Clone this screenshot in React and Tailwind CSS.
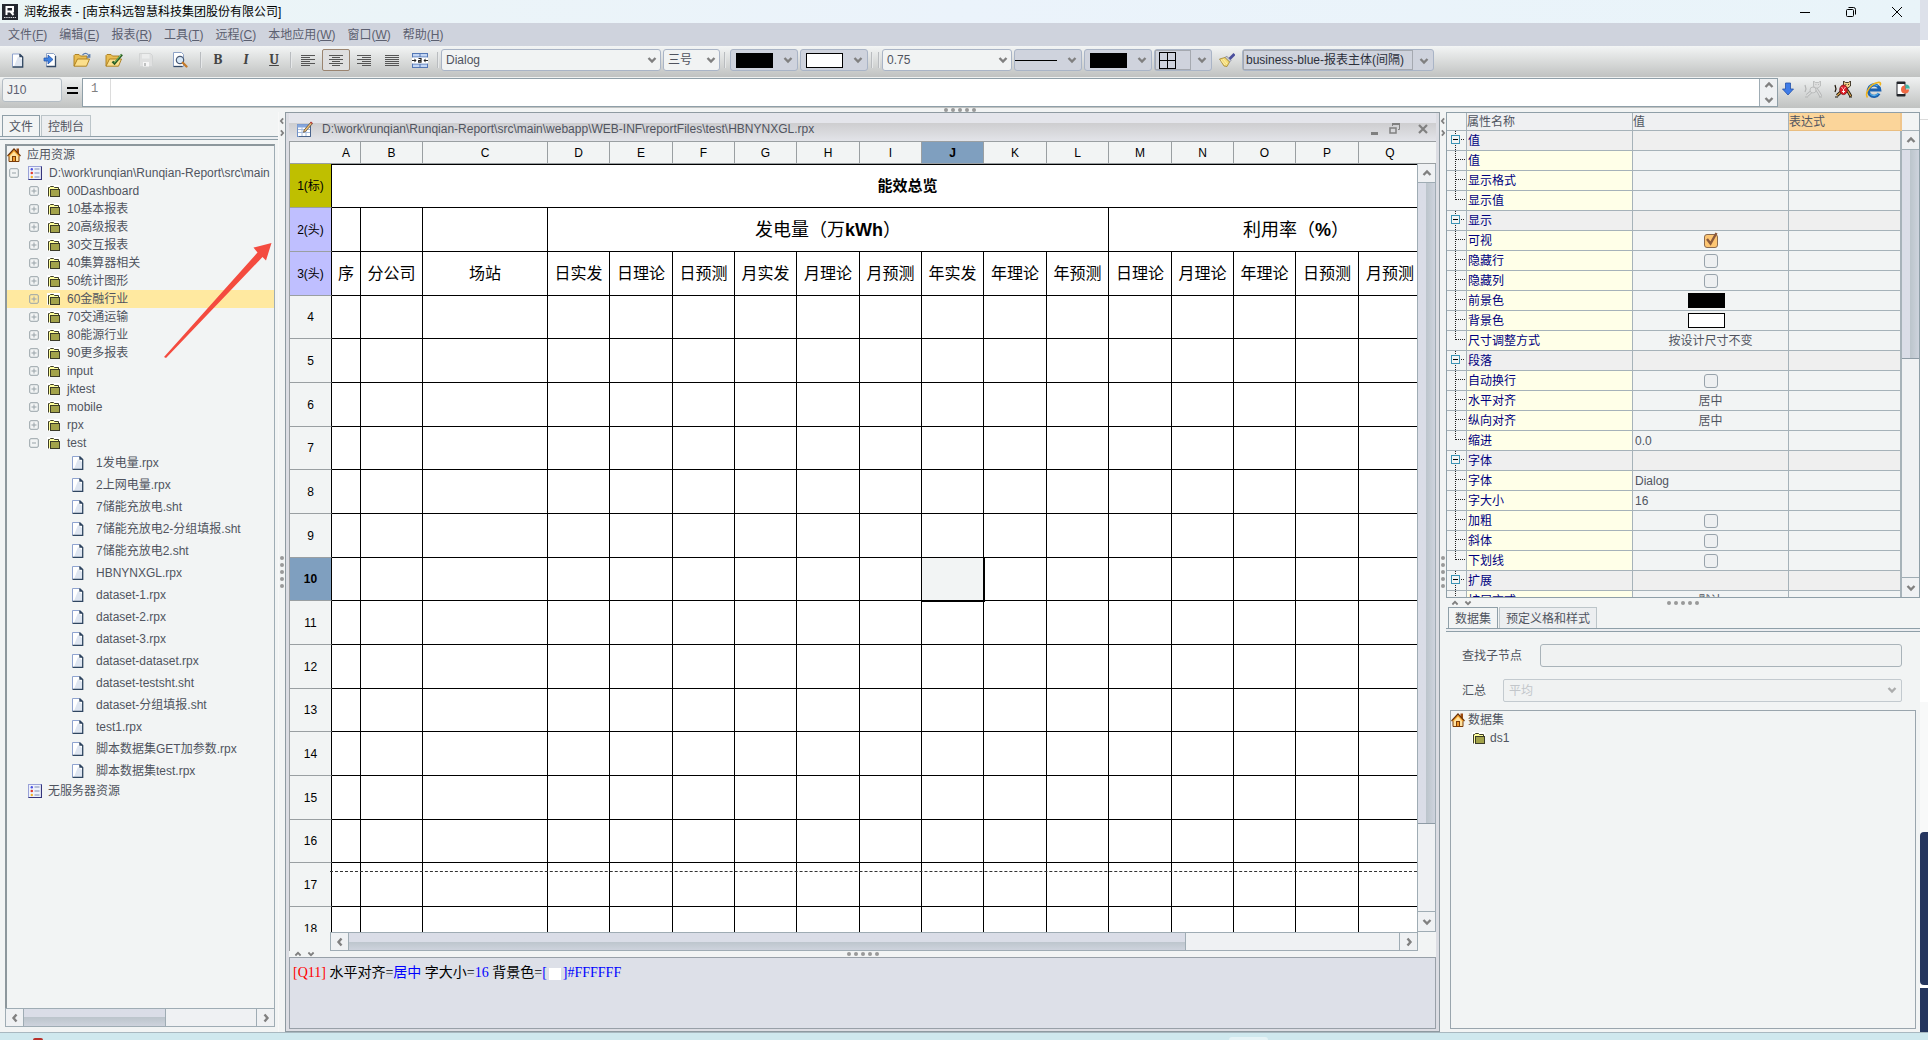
import React from 'react';

const MENUS = [
  ['文件', 'F'],
  ['编辑', 'E'],
  ['报表', 'R'],
  ['工具', 'T'],
  ['远程', 'C'],
  ['本地应用', 'W'],
  ['窗口', 'W'],
  ['帮助', 'H'],
];

const FOLDERS = [
  '00Dashboard', '10基本报表', '20高级报表', '30交互报表', '40集算器相关', '50统计图形',
  '60金融行业', '70交通运输', '80能源行业', '90更多报表', 'input', 'jktest', 'mobile', 'rpx', 'test',
];

const FILES = [
  '1发电量.rpx', '2上网电量.rpx', '7储能充放电.sht', '7储能充放电2-分组填报.sht', '7储能充放电2.sht',
  'HBNYNXGL.rpx', 'dataset-1.rpx', 'dataset-2.rpx', 'dataset-3.rpx', 'dataset-dataset.rpx',
  'dataset-testsht.sht', 'dataset-分组填报.sht', 'test1.rpx', '脚本数据集GET加参数.rpx', '脚本数据集test.rpx',
];

const COLUMNS = [
  ['A', 29], ['B', 62], ['C', 125], ['D', 62], ['E', 63], ['F', 62], ['G', 62], ['H', 63], ['I', 62],
  ['J', 62], ['K', 63], ['L', 62], ['M', 63], ['N', 62], ['O', 62], ['P', 63], ['Q', 63], ['', 62],
];

const HEADINGS = [
  '序', '分公司', '场站', '日实发', '日理论', '日预测', '月实发', '月理论', '月预测',
  '年实发', '年理论', '年预测', '日理论', '月理论', '年理论', '日预测', '月预测', '',
];

const BODY_ROWS = [4, 5, 6, 7, 8, 9, 10, 11, 12, 13, 14, 15, 16, 17, 18];

const PROPERTIES = [
  { name: '值', group: true },
  { name: '值' },
  { name: '显示格式' },
  { name: '显示值', last: true },
  { name: '显示', group: true },
  { name: '可视', type: 'check', checked: true },
  { name: '隐藏行', type: 'check' },
  { name: '隐藏列', type: 'check' },
  { name: '前景色', type: 'color', color: 'bg-black' },
  { name: '背景色', type: 'color', color: 'bg-white' },
  { name: '尺寸调整方式', type: 'center', value: '按设计尺寸不变', last: true },
  { name: '段落', group: true },
  { name: '自动换行', type: 'check' },
  { name: '水平对齐', type: 'center', value: '居中' },
  { name: '纵向对齐', type: 'center', value: '居中' },
  { name: '缩进', type: 'text', value: '0.0', last: true },
  { name: '字体', group: true },
  { name: '字体', type: 'text', value: 'Dialog' },
  { name: '字大小', type: 'text', value: '16' },
  { name: '加粗', type: 'check' },
  { name: '斜体', type: 'check' },
  { name: '下划线', type: 'check', last: true },
  { name: '扩展', group: true },
  { name: '扩展方式', type: 'center', value: '默认' },
];

/* ---------- icons ---------- */

function Chevron({ dir = 'down', className = '' }) {
  const d = {
    down: 'M1.5 3l3.5 3.5L8.500 3',
    up: 'M1.5 7l3.500-3.500L8.500 7',
    left: 'M6.500 1.500L3.500 5l3 3.500',
    right: 'M3.500 1.500L6.500 5l-3 3.500',
  }[dir];
  return (
    <svg viewBox="0 0 10 10" className={`w-2.5 h-2.5 shrink-0 ${className}`} fill="none" stroke="#808080" strokeWidth="2.4">
      <path d={d} />
    </svg>
  );
}

function AppLogo() {
  return (
    <svg viewBox="0 0 16 16" className="w-4 h-4 shrink-0">
      <rect width="16" height="16" fill="#23272f" />
      <path d="M4.500 11V3h6.500v4.500H5.500M8.500 7.500l3 3.500" fill="none" stroke="#fff" strokeWidth="2" />
      <path d="M2 13.500h12" stroke="#d8dade" strokeWidth="1" strokeDasharray="1.500 .7" />
    </svg>
  );
}

function PageIcon({ className = 'w-3.5 h-3.5' }) {
  return (
    <svg viewBox="0 0 14 14" className={`shrink-0 ${className}`}>
      <path d="M1.500.5h7l3 3v10h-10z" fill="#fff" />
      <path d="M7 3l4 3v7H3z" fill="#dfe6f1" />
      <path d="M1.500 13V.5H8.500" fill="none" stroke="#8fa3cf" />
      <path d="M8.500.5l3.200 3v10H1.500" fill="none" stroke="#2f4560" strokeWidth="1.300" />
      <path d="M8.300.5v3.300h3.400z" fill="#2f4560" />
    </svg>
  );
}

function FolderIcon() {
  return (
    <svg viewBox="0 0 14 14" className="w-3.5 h-3.5 shrink-0">
      <rect x="0" y="1" width="13" height="12" fill="#fff" />
      <path d="M1.500 12.500v-9h1l1-1h3l1 1h4v2" fill="#ffff9c" stroke="#3c3c28" />
      <rect x="3.500" y="5.500" width="9" height="7" fill="#a3a34a" stroke="#3c3c28" />
    </svg>
  );
}

function HomeIcon() {
  return (
    <svg viewBox="0 0 14 14" className="w-3.5 h-3.5 shrink-0">
      <rect x="9.500" y="0.500" width="2.500" height="5" fill="#9a4a10" />
      <path d="M2 7l5-5.500L12 7v6.500H2z" fill="#ffe2a0" stroke="#7a3c08" />
      <path d="M.5 8L7 1l6.500 7" fill="none" stroke="#6b3206" strokeWidth="1.200" />
      <path d="M1.800 8.300L7 2.800l5.200 5.500" fill="none" stroke="#f6a32a" strokeWidth="1.100" />
      <rect x="5.500" y="8.500" width="3" height="5" fill="#f09a2a" stroke="#7a3c08" />
    </svg>
  );
}

function ServerIcon() {
  return (
    <svg viewBox="0 0 14 14" className="w-3.5 h-3.5 shrink-0">
      <rect x=".5" y=".5" width="13" height="13" fill="#eef1fb" stroke="#9aa2d8" />
      <path d="M.5 13.500h13v-13" fill="none" stroke="#35357c" strokeWidth="1.200" />
      <circle cx="3.800" cy="3.200" r="1.200" fill="#4a50e0" />
      <circle cx="3.800" cy="7" r="1.300" fill="#e03a30" />
      <circle cx="3.800" cy="11" r="1.200" fill="#f2b02a" />
      <path d="M6.500 3h5M6.500 7h5M6.500 11h5" stroke="#7f8db4" />
    </svg>
  );
}

function Expander({ open, label }) {
  return (
    <button type="button" aria-label={label} className="w-2.5 h-2.5 shrink-0">
      <svg viewBox="0 0 10 10" className="w-2.5 h-2.5" fill="none" stroke="#98a3a8">
        <rect x=".7" y=".7" width="8.600" height="8.600" rx="1.200" />
        <path d={open ? 'M3 5h4' : 'M2.500 5h5M5 2.500v5'} />
      </svg>
    </button>
  );
}

function ImportIcon() {
  return (
    <svg viewBox="0 0 14 16" className="w-3.5 h-4">
      <path d="M3.500 1.500h7l2 2v11h-9z" fill="#fff" stroke="#8ea3c6" />
      <path d="M12.500 4v10.500h-9" fill="none" stroke="#334a68" strokeWidth="1.300" />
      <path d="M1 6h4V3l5 4.500L5 12V9H1z" fill="#3f82e0" stroke="#1c4fa8" strokeWidth=".7" />
    </svg>
  );
}

function OpenIcon({ pencil }) {
  return (
    <svg viewBox="0 0 18 16" className="w-[18px] h-4">
      <path d="M1 14V3.500l1-1h4l1.500 1.500H14V7" fill="#e9bd52" stroke="#a87a1a" strokeWidth=".9" />
      <path d="M1 14.200L4.500 7h12L13.500 14.200z" fill="#fbdf8c" stroke="#a87a1a" strokeWidth=".9" />
      {pencil ? (
        <>
          <path d="M7.500 9.500l2 2L17 2.500" fill="none" stroke="#2a5e25" strokeWidth="2.400" />
          <path d="M9.500 10.500l6.800-8" fill="none" stroke="#9be07d" strokeWidth=".8" />
        </>
      ) : (
        <path d="M9.500 3C12 .5 15 1 16 4.500M16.800 2v3.200h-3" fill="none" stroke="#5a7db0" strokeWidth="1.200" />
      )}
    </svg>
  );
}

function SaveIcon() {
  return (
    <svg viewBox="0 0 14 14" className="w-3.5 h-3.5">
      <path d="M.5.5h11l2 2v11H.5z" fill="#dfe0e0" stroke="#d2d4d4" />
      <rect x="3" y="1" width="7.500" height="4.500" fill="#eceded" />
      <rect x="4" y="9" width="6" height="4.500" fill="#f6f6f6" />
      <rect x="5" y="10" width="2" height="3" fill="#bfc1c1" />
    </svg>
  );
}

function PreviewIcon() {
  return (
    <svg viewBox="0 0 16 16" className="w-4 h-4">
      <path d="M1.500.5h8l2 2v12h-10z" fill="#fff" stroke="#8ea3c6" />
      <path d="M1.500 14.500h9" stroke="#334a68" strokeWidth="1.300" />
      <circle cx="8" cy="8" r="3.700" fill="#d7e8f8" stroke="#4a5a74" strokeWidth="1.200" />
      <path d="M10.800 10.800l3.700 3.700" stroke="#c47a2a" strokeWidth="2.300" strokeLinecap="round" />
    </svg>
  );
}

function AlignIcon({ kind }) {
  const d = {
    left: 'M0 1.500h14M0 3.500h9M0 5.500h14M0 7.500h9M0 9.500h14M0 11.500h9',
    center: 'M0 1.500h14M3 3.500h8M0 5.500h14M3 7.500h8M0 9.500h14M3 11.500h8',
    right: 'M0 1.500h14M5 3.500h9M0 5.500h14M5 7.500h9M0 9.500h14M5 11.500h9',
    justify: 'M0 1.500h14M0 3.500h14M0 5.500h14M0 7.500h14M0 9.500h14M0 11.500h14',
  }[kind];
  return (
    <svg viewBox="0 0 14 13" className="w-3.5 h-[13px]" stroke="#555" shapeRendering="crispEdges">
      <path d={d} />
    </svg>
  );
}

function MergeIcon() {
  return (
    <svg viewBox="0 0 16 15" className="w-4 h-[15px]">
      <rect x=".5" y=".5" width="15" height="14" fill="#c3d6f4" stroke="#5377b5" />
      <path d="M.5 4h15M.5 11h15M8 .5V4M8 11v3.500" stroke="#5377b5" />
      <rect x="0" y="4.500" width="16" height="6" fill="#fff" />
      <path d="M0 7.500h3M16 7.500h-3" stroke="#222" />
      <path d="M2.500 5.500L4.500 7.500 2.500 9.500zM13.500 5.500l-2 2 2 2z" fill="#222" />
      <path d="M6.500 5.500h2.500v4M9 7.500H6.700v1.700h2.800" fill="none" stroke="#222" strokeWidth="1.200" />
    </svg>
  );
}

function BrushIcon() {
  return (
    <svg viewBox="0 0 16 14" className="w-4 h-3.5">
      <path d="M15.500 1L10 6.500" stroke="#4b4f9c" strokeWidth="2.800" />
      <path d="M7.500 3l4.500 4.500-1.500 1.500-4.500-4z" fill="#c8ccd8" stroke="#666b80" strokeWidth=".6" />
      <path d="M.5 6l5.500-1.500 4.500 4.500-2.500 4.500-3-.5z" fill="#f4dc78" stroke="#9a7a20" strokeWidth=".7" />
      <path d="M2 7l4 5M4 6l4 5" stroke="#fdf2bc" strokeWidth=".8" />
    </svg>
  );
}

function SheetIcon() {
  return (
    <svg viewBox="0 0 16 16" className="w-4 h-4 shrink-0">
      <rect x=".5" y="3.500" width="13" height="12" fill="#fff" stroke="#7292c8" />
      <path d="M.5 5h13" stroke="#86a6dc" strokeWidth="3" />
      <path d="M1 8.500h12M1 11.500h12M5 6v9M9 6v9" stroke="#a9bede" />
      <path d="M13.500 4v11.500H2" fill="none" stroke="#4a648c" />
      <path d="M14 1l1.500 1.500L8.500 10.500l-2 .8.600-2.200z" fill="#f0c070" stroke="#5c4a38" strokeWidth=".8" />
      <path d="M13 1.500L14 .5l1.700 1.600-1 1z" fill="#c03c3c" />
    </svg>
  );
}

function DogIcon({ muted }) {
  const body = muted ? '#dcdddd' : '#d9a04a';
  const line = muted ? '#b4b6b6' : '#20180c';
  return (
    <svg viewBox="0 0 18 17" className="w-[18px] h-[17px]">
      <path d="M3 14.500l4-3.500 4-5 4 6 2 3.500" fill="none" stroke={line} strokeWidth="3" />
      <path d="M3 14.500l4-3.500 4-5 4 6 2 3.500" fill="none" stroke={body} strokeWidth="1.300" />
      <path d="M9.500 0l2 1.500h3L16.500 0v5l-2.500 2h-3L9.500 5z" fill={muted ? '#dcdddd' : '#f2cf8a'} stroke={line} strokeWidth=".8" />
      <path d="M11.500 3.500h.8M14.200 3.500h.8M1 4l1 4-1 3M1 16h3M15 16h3" stroke={line} strokeWidth="1.200" fill="none" />
      {muted ? (
        <circle cx="9" cy="9" r="3" fill="#dedfdf" stroke={line} strokeWidth=".8" />
      ) : (
        <>
          <ellipse cx="9.500" cy="8.800" rx="3.800" ry="4.800" fill="#e0202a" stroke="#7c0d12" strokeWidth=".8" />
          <path d="M7.500 6.500l1.500 1M11.500 6.500l-1.500 1M8 10.500h3M9.500 8v4" stroke="#fff" strokeWidth=".9" />
        </>
      )}
    </svg>
  );
}

function BrowserIcon() {
  return (
    <svg viewBox="0 0 17 17" className="w-[17px] h-[17px]" fill="none">
      <path d="M14 12.500A5.700 5.700 0 1 1 14.700 9H5" stroke="#1c62b0" strokeWidth="3.200" />
      <path d="M13.500 12A5 5 0 0 1 5 12.500M4.500 6.500a5 5 0 0 1 8-1.500" stroke="#54b4ee" strokeWidth="1.200" />
      <path d="M2.500 16.500C-.5 12 5 3 13 1.500c2.500-.4 3 .8 2 2.800" stroke="#f0b41c" strokeWidth="1.600" />
    </svg>
  );
}

function PhoneIcon() {
  return (
    <svg viewBox="0 0 14 16" className="w-3.5 h-4">
      <rect x=".5" y=".5" width="9" height="15" rx="1" fill="#22252a" />
      <rect x="1.500" y="3" width="7" height="10" fill="#fff" />
      <path d="M9 4.500a4 4 0 1 0 4 4H9z" fill="#f06a44" />
      <path d="M9.800 3.500a4.200 4.200 0 0 1 4 4h-4z" fill="#3eb7a5" />
    </svg>
  );
}

/* ---------- small controls ---------- */

function IconButton({ label, className = 'w-8', children }) {
  return (
    <button type="button" aria-label={label} className={`h-[22px] flex items-center justify-center shrink-0 ${className}`}>
      {children}
    </button>
  );
}

function Separator({ className = 'w-1.5' }) {
  return (
    <div className={`h-4 mt-[3px] shrink-0 flex justify-center ${className}`}>
      <div className="w-0.5 bg-[#b9bcbf] border-r border-[#e6e8e9]" />
    </div>
  );
}

function Combo({ label, value, className }) {
  return (
    <div className={`relative shrink-0 ${className}`}>
      <select
        aria-label={label}
        defaultValue={value}
        className="appearance-none w-full h-[22px] pl-1 pr-5 rounded-[3px] border border-[#a9b4c6] bg-[#f1f3f3] text-xs leading-5 outline-none"
      >
        <option>{value}</option>
      </select>
      <Chevron className="absolute right-1 top-1.5" />
    </div>
  );
}

function DropButton({ label, className = 'w-[68px]', children }) {
  return (
    <button
      type="button"
      aria-label={label}
      className={`h-[22px] shrink-0 flex items-center justify-between pr-1 rounded-[3px] border border-[#a9b4c6] bg-[#cfd3dd] ${className}`}
    >
      {children}
      <Chevron />
    </button>
  );
}

function GripDots({ vertical }) {
  return (
    <div className={`flex gap-[3px] ${vertical ? 'flex-col' : ''}`}>
      {[0, 1, 2, 3, 4].map((n) => (
        <span key={n} className="w-1 h-1 rounded-full bg-[#999]" />
      ))}
    </div>
  );
}

function VSplitter() {
  return (
    <div className="relative w-1.5 shrink-0 flex items-center justify-center">
      <div className="absolute top-1 -left-0.5 flex flex-col gap-0.5">
        <Chevron dir="left" className="scale-75" />
        <Chevron dir="right" className="scale-75" />
      </div>
      <GripDots vertical />
    </div>
  );
}

function HSplitter({ className }) {
  return (
    <div className={`relative shrink-0 flex items-center justify-center bg-[#f2f4f4] ${className}`}>
      <div className="absolute left-1 inset-y-0 flex items-center gap-[3px] overflow-hidden">
        <Chevron dir="up" className="scale-75" />
        <Chevron dir="down" className="scale-75" />
      </div>
      <GripDots />
    </div>
  );
}

function HScroll({ thumb, className = '' }) {
  return (
    <div className={`h-[19px] shrink-0 flex border border-[#9facb4] bg-[#eff1f3] ${className}`}>
      <button type="button" aria-label="向左滚动" className="w-[18px] flex items-center justify-center border-r border-[#9facb4]">
        <Chevron dir="left" />
      </button>
      <div className="flex-1">
        <div
          className="h-full border-r border-[#9facb4] bg-linear-to-b from-[#dadde7] from-50% via-[#bcc5cc] via-50% to-[#ced3dd]"
          style={{ width: thumb }}
        />
      </div>
      <button type="button" aria-label="向右滚动" className="w-[18px] flex items-center justify-center border-l border-[#9facb4]">
        <Chevron dir="right" />
      </button>
    </div>
  );
}

function VScroll({ thumb, className = '' }) {
  return (
    <div className={`shrink-0 flex flex-col bg-[#eff1f3] ${className}`}>
      <button type="button" aria-label="向上滚动" className="h-[19px] flex items-center justify-center border-b border-[#9facb4]">
        <Chevron dir="up" />
      </button>
      <div className="flex-1">
        <div
          className="border-b border-[#8e9ba5] bg-linear-to-r from-[#dadde7] from-50% via-[#bcc5cc] via-50% to-[#ced3dd]"
          style={{ height: thumb }}
        />
      </div>
      <button type="button" aria-label="向下滚动" className="h-5 flex items-center justify-center border-t border-[#9facb4]">
        <Chevron />
      </button>
    </div>
  );
}

function Tabs({ items }) {
  return (
    <div className="shrink-0">
      <div className="flex items-end gap-px pl-0.5 h-[21px]" role="tablist">
        {items.map((item, i) => (
          <button
            key={item}
            type="button"
            role="tab"
            aria-selected={i === 0}
            className={
              i === 0
                ? 'h-[21px] px-1.5 pt-px border border-b-0 border-[#8f9fa8] bg-[#f2f4f4] leading-5'
                : 'h-[21px] px-1.5 pt-px border border-b-0 border-[#bcc5c9] bg-[#eceef0] leading-5'
            }
          >
            {item}
          </button>
        ))}
      </div>
      <div className="h-1 border-y border-[#8f9fa8] bg-[#eceef1]" />
    </div>
  );
}

/* ---------- panels ---------- */

function TitleBar() {
  return (
    <header className="h-[23px] shrink-0 flex items-center justify-between bg-linear-to-r from-[#ebf5f6] via-[#ebf3fb] to-[#e9f4f9] text-black">
      <div className="flex items-center gap-1.5 pl-0.5">
        <AppLogo />
        <h1>润乾报表 - [南京科远智慧科技集团股份有限公司]</h1>
      </div>
      <div className="flex">
        <IconButton label="最小化" className="w-[46px]">
          <svg viewBox="0 0 10 10" className="w-2.5 h-2.5" stroke="#000"><path d="M0 5.500h10" /></svg>
        </IconButton>
        <IconButton label="还原" className="w-[46px]">
          <svg viewBox="0 0 10 10" className="w-2.5 h-2.5" fill="none" stroke="#000">
            <rect x=".5" y="2.500" width="7" height="7" rx="1" />
            <path d="M2.500.5h5a2 2 0 0 1 2 2v5" />
          </svg>
        </IconButton>
        <IconButton label="关闭" className="w-[46px]">
          <svg viewBox="0 0 10 10" className="w-2.5 h-2.5" stroke="#000"><path d="M0 0l10 10M10 0L0 10" /></svg>
        </IconButton>
      </div>
    </header>
  );
}

function MenuBar() {
  return (
    <nav className="h-[23px] shrink-0 flex items-center pl-0.5 bg-[#cfd3dd] text-[#5c6070]">
      {MENUS.map(([name, key]) => (
        <button key={name + key} type="button" className="px-1.5">
          {name}(<span className="underline">{key}</span>)
        </button>
      ))}
    </nav>
  );
}

function Toolbar() {
  return (
    <div className="h-[31px] shrink-0 flex items-start pt-[3px] pl-0.5 bg-linear-to-b from-[#f3f5f5] to-[#c0c2c1]">
      <IconButton label="新建"><PageIcon className="w-3.5 h-[15px]" /></IconButton>
      <IconButton label="导入"><ImportIcon /></IconButton>
      <IconButton label="打开"><OpenIcon /></IconButton>
      <IconButton label="打开并编辑"><OpenIcon pencil /></IconButton>
      <IconButton label="保存"><SaveIcon /></IconButton>
      <IconButton label="预览" className="w-9"><PreviewIcon /></IconButton>
      <Separator />
      <IconButton label="加粗" className="w-7 font-serif text-sm font-bold text-[#444]">B</IconButton>
      <IconButton label="斜体" className="w-7 font-serif text-sm font-bold italic text-[#444]">I</IconButton>
      <IconButton label="下划线" className="w-7 font-serif text-sm font-bold underline text-[#444]">U</IconButton>
      <Separator />
      <IconButton label="左对齐" className="w-7"><AlignIcon kind="left" /></IconButton>
      <IconButton label="居中" className="w-7 border border-[#9a8470] rounded-xs bg-[#dfdfe0]"><AlignIcon kind="center" /></IconButton>
      <IconButton label="右对齐" className="w-7"><AlignIcon kind="right" /></IconButton>
      <IconButton label="两端对齐" className="w-7"><AlignIcon kind="justify" /></IconButton>
      <IconButton label="合并单元格" className="w-7"><MergeIcon /></IconButton>
      <Separator className="w-[7px]" />
      <Combo label="字体" value="Dialog" className="w-[220px]" />
      <Combo label="字号" value="三号" className="w-[57px] ml-0.5" />
      <Separator className="w-2.5" />
      <DropButton label="前景色"><span className="w-[37px] h-[15px] ml-[5px] bg-black" /></DropButton>
      <DropButton label="背景色" className="w-[68px] ml-0.5"><span className="w-[37px] h-[15px] ml-[5px] bg-white border border-black" /></DropButton>
      <Separator className="w-[7px]" />
      <Separator className="w-[7px]" />
      <Combo label="线宽" value="0.75" className="w-[130px]" />
      <DropButton label="线型" className="w-[68px] ml-0.5"><span className="w-[42px] h-px bg-black" /></DropButton>
      <DropButton label="边框颜色" className="w-[68px] ml-0.5"><span className="w-[37px] h-[15px] ml-[5px] bg-black" /></DropButton>
      <DropButton label="边框" className="w-[58px] ml-0.5">
        <span className="w-9 h-5 pl-[3px] flex items-center border border-[#a5a9b0]">
          <svg viewBox="0 0 17 17" className="w-[17px] h-[17px]" fill="none" stroke="#000" shapeRendering="crispEdges">
            <path d="M.5.5h16v16H.5zM8.500 0v17M0 8.500h17" />
          </svg>
        </span>
      </DropButton>
      <IconButton label="格式刷" className="w-[30px]"><BrushIcon /></IconButton>
      <div className="relative w-[192px] h-[22px] shrink-0 pr-5 rounded-[3px] border border-[#a9b4c6] bg-[#cfd3dd]">
        <select
          aria-label="报表样式"
          defaultValue="style"
          className="appearance-none w-full h-5 pl-0.5 border border-[#a5a9b0] leading-4 text-[#2c2f3a] outline-none"
        >
          <option value="style">business-blue-报表主体(间隔)</option>
        </select>
        <Chevron className="absolute right-1 top-1.5" />
      </div>
    </div>
  );
}

function FormulaBar() {
  return (
    <div className="h-[31px] shrink-0 flex items-start pt-px bg-linear-to-b from-[#f0f2f2] to-[#c0c2c1]">
      <input
        aria-label="单元格"
        defaultValue="J10"
        className="w-[60px] h-6 ml-0.5 pl-1 rounded-[3px] border border-[#b3bcc4] bg-[#f0f2f2] text-[#5c6070] outline-none"
      />
      <div className="w-5 h-6 flex flex-col items-center justify-center gap-[3px]">
        <span className="w-[11px] h-0.5 bg-black" />
        <span className="w-[11px] h-0.5 bg-black" />
      </div>
      <div className="flex-1 h-[29px] flex border border-[#8f9fa8] bg-white">
        <span className="w-7 pt-0.5 pr-1 text-center leading-4 text-[#808080] border-r border-[#dcdcdc] font-['Liberation_Mono']">1</span>
        <input aria-label="表达式" className="flex-1 px-1 outline-none" />
        <div className="w-[18px] flex flex-col items-center justify-between py-px border-l border-[#9facb4] bg-[#eff1f3]">
          <button type="button" aria-label="上一行"><Chevron dir="up" /></button>
          <button type="button" aria-label="下一行"><Chevron /></button>
        </div>
      </div>
      <IconButton label="向下" className="w-5">
        <svg viewBox="0 0 12 14" className="w-3 h-3.5">
          <path d="M3.500 1h5v6h3L6 13 .5 7h3z" fill="#3f7ce8" stroke="#2452a8" strokeWidth=".8" />
        </svg>
      </IconButton>
      <IconButton label="停止服务" className="w-[30px]"><DogIcon muted /></IconButton>
      <IconButton label="启动服务" className="w-[30px]"><DogIcon /></IconButton>
      <IconButton label="浏览器预览" className="w-[30px]"><BrowserIcon /></IconButton>
      <IconButton label="手机预览" className="w-[30px] mr-0.5"><PhoneIcon /></IconButton>
    </div>
  );
}

function ResourcePanel() {
  return (
    <aside className="w-[279px] shrink-0 flex flex-col pt-[3px] pb-[5px] border-r border-[#f8f8f8]">
      <Tabs items={['文件', '控制台']} />
      <div className="flex-1 min-h-0 flex flex-col mt-1 ml-[5px] mr-[3px]">
        <ul className="relative flex-1 min-h-0 border-l-2 border-t-2 border-r border-[#8d979c] border-r-[#9facb4] whitespace-nowrap overflow-hidden">
          <li className="h-[18px] flex items-center gap-1.5">
            <HomeIcon />
            应用资源
          </li>
          <li className="h-[18px] flex items-center pl-0.5">
            <Expander open label="收起应用" />
            <span className="flex items-center gap-[7px] pl-[9px]">
              <ServerIcon />
              D:\work\runqian\Runqian-Report\src\main
            </span>
          </li>
          {FOLDERS.map((name) => (
            <li
              key={name}
              className={`h-[18px] flex items-center pl-[22px] ${name.startsWith('60') ? 'bg-[#ffe9a0]' : ''}`}
            >
              <Expander open={name === 'test'} label={`展开 ${name}`} />
              <span className="flex items-center gap-1.5 pl-2">
                <FolderIcon />
                {name}
              </span>
            </li>
          ))}
          {FILES.map((name) => (
            <li key={name} className="h-[22px] flex items-center gap-[11px] pl-16">
              <PageIcon />
              {name}
            </li>
          ))}
          <li className="h-[18px] flex items-center gap-1.5 pl-[21px]">
            <ServerIcon />
            无服务器资源
          </li>
          {/* annotation arrow drawn over the tree */}
          <svg viewBox="0 0 108 116" className="absolute left-[157px] top-[96px] w-[108px] h-[116px]" fill="#f44b3f">
            <path d="M0 115L93.500 10.500l-4-5L107.500 1l-5.500 17.500-3.500-3.500L2 116z" />
          </svg>
        </ul>
        <HScroll thumb="61%" />
      </div>
    </aside>
  );
}

function ReportGrid() {
  return (
    <table className="table-fixed border-separate border-spacing-0 w-[1194px] text-black">
      <colgroup>
        <col className="w-[42px]" />
        {COLUMNS.map(([name, width], i) => (
          <col key={name + i} style={{ width }} />
        ))}
      </colgroup>
      <thead>
        <tr className="h-[22px]">
          <th className="p-0 bg-[#f2f4f4] border-b border-[#9a9fa2]" />
          {COLUMNS.map(([name], i) => (
            <th
              key={name + i}
              className={`p-0 border-b border-r border-[#9a9fa2] text-xs ${name === 'J' ? 'bg-[#7f9fbf] font-bold' : 'bg-[#f2f4f4] font-normal'}`}
            >
              {name}
            </th>
          ))}
        </tr>
      </thead>
      <tbody className="text-base leading-5">
        <tr className="h-11">
          <th className="p-0 bg-[#bfbf00] border-b border-r border-b-[#9a9fa2] border-r-black text-xs font-normal">1(标)</th>
          <td colSpan={18} className="p-0 border-y border-r border-black text-center text-[15px] font-bold">能效总览</td>
        </tr>
        <tr className="h-11">
          <th className="p-0 bg-[#bfbfff] border-b border-r border-b-[#9a9fa2] border-r-black text-xs font-normal">2(头)</th>
          <td className="border-b border-r border-black" />
          <td className="border-b border-r border-black" />
          <td className="border-b border-r border-black" />
          <td colSpan={9} className="p-0 border-b border-r border-black text-center text-lg leading-5">发电量（万<b>kWh</b>）</td>
          <td colSpan={6} className="p-0 border-b border-r border-black text-center text-lg leading-5">利用率（<b>%</b>）</td>
        </tr>
        <tr className="h-11">
          <th className="p-0 bg-[#bfbfff] border-b border-r border-b-[#9a9fa2] border-r-black text-xs font-normal">3(头)</th>
          {HEADINGS.map((text, i) => (
            <td key={i} className="p-0 border-b border-r border-black text-center whitespace-nowrap">{text}</td>
          ))}
        </tr>
        {BODY_ROWS.map((row) => (
          <tr key={row} className={row % 3 === 1 ? 'h-[43px]' : 'h-11'}>
            <th
              className={`p-0 border-b border-r border-b-[#9a9fa2] border-r-black text-xs ${row === 10 ? 'bg-[#7f9fbf] font-bold' : 'bg-[#f2f4f4] font-normal'}`}
            >
              {row}
            </th>
            {COLUMNS.map(([name], i) => (
              <td
                key={i}
                className={`p-0 border-b border-r border-black ${name === 'J' && row === 10 ? 'bg-[#f2f4f4] outline outline-black' : ''}`}
              />
            ))}
          </tr>
        ))}
      </tbody>
    </table>
  );
}

function ReportWindow() {
  return (
    <main className="flex-1 min-w-0 flex flex-col border border-[#8e9aa1] bg-[#dcdde3] px-[3px] pb-0.5">
      <div className="h-7 shrink-0 flex items-center justify-between pl-2 pr-[7px] pt-1 bg-linear-to-b from-[#e4e5eb] from-35% via-[#cdcdcf] via-35% to-[#e3e4e9]">
        <div className="flex items-center gap-[9px]">
          <SheetIcon />
          <h2>D:\work\runqian\Runqian-Report\src\main\webapp\WEB-INF\reportFiles\test\HBNYNXGL.rpx</h2>
        </div>
        <div className="flex items-center gap-2">
          <button type="button" aria-label="最小化报表" className="w-2.5 h-3 flex items-end">
            <span className="w-[7px] h-[3px] bg-[#808080]" />
          </button>
          <button type="button" aria-label="还原报表" className="w-3 h-3">
            <svg viewBox="0 0 12 12" className="w-3 h-3" fill="none" stroke="#808080">
              <path d="M3.500 3V1.500h7v5H9" /><path d="M3 1h8" strokeWidth="2" />
              <rect x="1" y="5" width="6" height="5" strokeWidth="1.500" />
            </svg>
          </button>
          <button type="button" aria-label="关闭报表" className="w-3 h-3 ml-2">
            <svg viewBox="0 0 12 12" className="w-3 h-3" stroke="#808080" strokeWidth="2.200"><path d="M2 2l8 8M10 2l-8 8" /></svg>
          </button>
        </div>
      </div>

      <div className="flex-1 min-h-0 flex flex-col border-l border-t border-[#9a9fa2] bg-[#f2f4f4]">
        <div className="flex-1 min-h-0 flex">
          <div className="relative flex-1 min-w-0 overflow-hidden bg-white">
            <ReportGrid />
            {/* page break */}
            <div className="absolute left-10 right-0 top-[729px] border-t border-dashed border-[#333]" />
          </div>
          <div className="w-[19px] shrink-0 flex flex-col">
            <div className="h-[22px] border-b border-[#9a9fa2]" />
            <VScroll thumb="88%" className="flex-1 border-x border-b border-[#9facb4]" />
          </div>
        </div>
        <div className="flex">
          <HScroll thumb="79.7%" className="flex-1 ml-10 mr-[18px]" />
        </div>
      </div>

      <HSplitter className="h-1.5" />
      <div className="h-[72px] shrink-0 border border-[#98a0a8] bg-[#dde0e8] px-[3px] pt-[7px] text-sm leading-4 text-black font-['Liberation_Serif','Noto_Sans_CJK_SC',serif]">
        <span className="text-[#ff0000]">[Q11]</span> 水平对齐=<span className="text-[#0000ff]">居中</span> 字大小=<span className="text-[#0000ff]">16</span> 背景色=
        <span className="text-[#0000ff]">[<span className="inline-block w-3 h-3 mx-0.5 align-middle bg-white" />]#FFFFFF</span>
      </div>
    </main>
  );
}

function TreeCell({ group, last }) {
  return (
    <svg viewBox="0 0 19 20" className="block w-[19px] h-5" fill="none" shapeRendering="crispEdges">
      <path d={last ? 'M8.500 0v10' : 'M8.500 0v20'} stroke="#222" strokeDasharray="1 1" />
      <path d={group ? 'M14 8.500h4' : 'M9 8.500h9'} stroke="#222" strokeDasharray="1 1" />
      {group && (
        <>
          <rect x="4.500" y="4.500" width="8" height="8" fill="#f2f4f4" stroke="#3a93b5" />
          <path d="M6 8.500h5" stroke="#000" />
        </>
      )}
    </svg>
  );
}

function PropertyValue({ row }) {
  if (row.type === 'check') {
    return (
      <span className="relative flex w-3.5 h-3.5 mx-auto">
        <input
          type="checkbox"
          aria-label={row.name}
          defaultChecked={row.checked}
          className="appearance-none w-3.5 h-3.5 rounded-[3px] border border-[#98a3ab] bg-[#eef0f1] checked:border-[#8a6a50] checked:bg-[#fdc673]"
        />
        {row.checked && (
          <svg viewBox="0 0 14 16" className="absolute left-0 -top-0.5 w-3.5 h-4" fill="none" stroke="#8c5a3c" strokeWidth="2.400">
            <path d="M3 7l3.500 4.500L12.500 1" />
          </svg>
        )}
      </span>
    );
  }
  if (row.type === 'color') {
    return <span className={`block w-[37px] h-[15px] ml-[55px] border border-black ${row.color}`} />;
  }
  return row.value || null;
}

function PropertyTable() {
  return (
    <div className="h-[486px] shrink-0 flex border border-[#8f9fa8] bg-[#f2f4f4] overflow-hidden">
      <div className="flex-1 min-w-0">
        <table className="table-fixed w-full border-separate border-spacing-0">
          <colgroup>
            <col className="w-5" />
            <col className="w-[166px]" />
            <col className="w-[156px]" />
            <col />
          </colgroup>
          <thead>
            <tr className="h-[18px] text-left leading-4">
              <th className="p-0 border-b border-r border-[#a6b2b9]" />
              <th className="p-0 bg-[#eff0f2] border-b border-r border-[#a6b2b9] font-normal">属性名称</th>
              <th className="p-0 bg-[#eff0f2] border-b border-r border-[#a6b2b9] font-normal">值</th>
              <th className="p-0 bg-[#fbd59a] border-b border-r-2 border-b-[#e9bd80] border-r-[#f0c68c] font-normal">表达式</th>
            </tr>
          </thead>
          <tbody className="leading-4">
            {PROPERTIES.map((row, i) => (
              <tr key={i} className="h-5">
                <td className="p-0 h-5 border-b border-r border-[#a6b2b9]">
                  <div className="h-[19px] overflow-hidden"><TreeCell group={row.group} last={row.last} /></div>
                </td>
                <th
                  className={`p-0 pl-px text-left font-normal text-[#000080] border-b border-r border-[#a6b2b9] ${row.group ? 'bg-[#efefef]' : 'bg-[#ffffe8]'}`}
                >
                  {row.name}
                </th>
                <td
                  className={`p-0 border-b border-r border-[#a6b2b9] ${row.group ? 'bg-[#efefef]' : ''} ${row.type === 'center' ? 'text-center' : ''} ${row.type === 'text' ? 'pl-0.5' : ''}`}
                >
                  <PropertyValue row={row} />
                </td>
                <td className={`p-0 border-b border-r-2 border-[#a6b2b9] ${row.group ? 'bg-[#efefef]' : ''}`} />
              </tr>
            ))}
          </tbody>
        </table>
      </div>
      <div className="w-[17px] shrink-0 flex flex-col">
        <div className="h-[18px] border-b border-[#a6b2b9]" />
        <VScroll thumb="49%" className="flex-1" />
      </div>
    </div>
  );
}

function DatasetPanel() {
  return (
    <section className="flex-1 min-h-0 flex flex-col pb-[3px]">
      <Tabs items={['数据集', '预定义格和样式']} />
      <div className="shrink-0 flex flex-col gap-3 pt-3 pb-2 pl-4 pr-[18px]">
        <div className="flex items-center gap-[18px]">
          <label htmlFor="node-search">查找子节点</label>
          <input id="node-search" className="flex-1 h-[23px] px-1 rounded-[3px] border border-[#a9b3b9] bg-[#f0f2f2] outline-none" />
        </div>
        <div className="flex items-center gap-[17px]">
          <label htmlFor="summary">汇总</label>
          <div className="relative flex-1">
            <select
              id="summary"
              disabled
              defaultValue="avg"
              className="block appearance-none w-full h-[23px] pl-[5px] rounded-xs border border-[#c3cacf] bg-[#f0f2f2] text-[#c2c6ca] opacity-100"
            >
              <option value="avg">平均</option>
            </select>
            <Chevron className="absolute right-[5px] top-1.5 opacity-60" />
          </div>
        </div>
      </div>
      <ul className="flex-1 min-h-0 mx-1 border border-[#9aa5ad]">
        <li className="h-[18px] flex items-center gap-[3px]">
          <HomeIcon />
          数据集
        </li>
        <li className="h-[18px] flex items-center gap-1 pl-[21px]">
          <FolderIcon />
          ds1
        </li>
      </ul>
    </section>
  );
}

export default function App() {
  return (
    <div className="h-screen flex flex-col overflow-hidden bg-[#cfe8ee] text-xs text-[#50545f] font-['Liberation_Sans','Noto_Sans_CJK_SC',sans-serif]">
      <div className="flex-1 min-h-0 flex">
        <div className="flex-1 min-w-0 flex flex-col bg-[#f2f4f4]">
          <TitleBar />
          <MenuBar />
          <Toolbar />
          <FormulaBar />
          <div className="h-1 shrink-0 flex items-center justify-center overflow-hidden">
            <GripDots />
          </div>
          <div className="flex-1 min-h-0 flex">
            <ResourcePanel />
            <VSplitter />
            <ReportWindow />
            <VSplitter />
            <aside className="w-[474px] shrink-0 flex flex-col">
              <PropertyTable />
              <HSplitter className="h-[9px]" />
              <DatasetPanel />
            </aside>
          </div>
        </div>
        {/* sliver of the window behind */}
        <div className="w-2 shrink-0 flex flex-col bg-white">
          <div className="h-10 bg-[#dde1ea]" />
          <div className="h-20 rounded-tl-md border-b border-[#dcdcdc]" />
          <div className="flex-1" />
          <div className="h-[130px] bg-[#f8f9f9]" />
          <div className="h-[153px] rounded-l-sm bg-[#25365f]" />
          <div className="h-11 mt-[3px] bg-[#25365f]" />
        </div>
      </div>
      <footer className="h-2 shrink-0 flex items-end justify-between border-t border-[#a8b8c0] bg-[#cfe8ee] pl-[33px]">
        <span className="w-2.5 h-0.5 rounded-t-full bg-[#b8302a]" />
        <span className="w-[39px] h-[3px] mr-[660px] rounded-t-sm bg-[#e6f3f6]" />
      </footer>
    </div>
  );
}
